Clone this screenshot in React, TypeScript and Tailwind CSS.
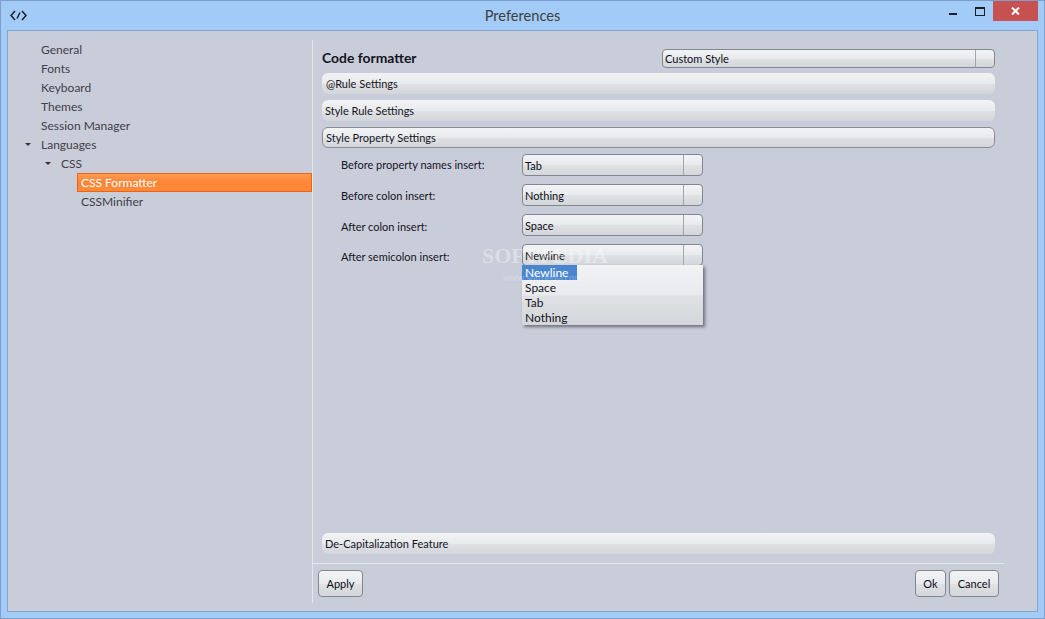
const font = "font-['Lato','Open_Sans',sans-serif]";

const grad = 'bg-[linear-gradient(to_bottom,#f2f3f5_0%,#e9eaed_50%,#dfe1e4_52%,#d3d6da_100%)]';

function TreeRow({ label, indent, arrow, selected }: { label: string; indent: string; arrow?: string; selected?: boolean }) {
  if (selected) {
    return (
      <div className={`h-[19px] ${indent} flex`}>
        <div className="flex-1 flex items-center pl-[3px] text-white border border-[#f0640f] bg-[linear-gradient(to_bottom,#ff9a52,#ff8536_50%,#ff8a3c)]">
          {label}
        </div>
      </div>
    );
  }
  return (
    <div className={`h-[19px] ${indent} flex items-center text-[#40404a] relative`}>
      {arrow && (
        <span className={`absolute ${arrow} top-[8px] w-0 h-0 border-l-[3px] border-r-[3px] border-t-[3px] border-l-transparent border-r-transparent border-t-[#3a3428]`} />
      )}
      {label}
    </div>
  );
}

function Section({ label, open, pad }: { label: string; open?: boolean; pad: string }) {
  return (
    <div
      className={`h-[21px] flex items-center ${pad} pt-[2px] text-[11px] text-[#14141e] ${grad} rounded-[6px] ${open ? 'border border-[#8a8d94]' : ''}`}
    >
      {label}
    </div>
  );
}

function Combo({ value, width, height }: { value: string; width: string; height: string }) {
  return (
    <div className={`${width} ${height} flex items-stretch border border-[#83868d] rounded-[4px] ${grad} text-[11px] text-[#0c0c16]`}>
      <div className="flex-1 flex items-center pl-[2px] pt-[3px]">{value}</div>
      <div className="w-[19px] border-l border-[#a2a5ab]" />
    </div>
  );
}

function PropRow({ label, value, labelPad }: { label: string; value: string; labelPad: string }) {
  return (
    <div className="flex items-center h-[22px]">
      <div className={`w-[200px] pl-[19px] ${labelPad} text-[11px] text-[#14141e]`}>{label}</div>
      <Combo value={value} width="w-[181px]" height="h-[22px]" />
    </div>
  );
}

function Btn({ label, width }: { label: string; width: string }) {
  return (
    <div className={`${width} h-[27px] flex items-center justify-center pt-[2px] border border-[#83868d] rounded-[4px] ${grad} text-[11px] text-[#0c0c16]`}>
      {label}
    </div>
  );
}

export default function App() {
  return (
    <div className={`${font} w-[1045px] h-[619px] flex flex-col bg-[#a3cbf8] border border-[#7f9fca] text-[12px] overflow-hidden`}>
      <div className="h-[29px] grid grid-cols-[1fr_auto_1fr] items-start shrink-0">
        <div className="pl-[9px] pt-[9px]">
          <svg width="17" height="11" viewBox="0 0 17 11" fill="none" stroke="#15181c" strokeWidth="1.4">
            <path d="M5 1 1 5.5 5 10" />
            <path d="M12 1 16 5.5 12 10" />
            <path d="M7 8.5 10 2.5" />
          </svg>
        </div>
        <div className="pt-[4px] text-[14.6px] text-[#3c3f44]">Preferences</div>
        <div className="flex justify-end items-start pr-[6px]">
          <div className="w-[8px] h-[2px] mt-[12px] mr-[18px] bg-[#1c1f24]" />
          <svg width="10" height="9" viewBox="0 0 10 9" className="mt-[6px] mr-[8px]" fill="none" stroke="#1c1f24">
            <rect x="0.5" y="0.5" width="9" height="8" />
            <path d="M0 1.5H10" />
          </svg>
          <div className="w-[45px] h-[20px] bg-[#c75050] flex items-center justify-center">
            <svg width="9" height="8" viewBox="0 0 9 8" stroke="#fff" strokeWidth="2">
              <path d="M1 0.5 8 7.5M8 0.5 1 7.5" />
            </svg>
          </div>
        </div>
      </div>

      <div className="flex-1 mx-[6px] mb-[6px] flex border border-[#84a5ce] bg-[#c9cdd9] pt-[9px] pb-[8px] relative">
        <div className="w-[304px] shrink-0">
          <TreeRow label="General" indent="pl-[33px]" />
          <TreeRow label="Fonts" indent="pl-[33px]" />
          <TreeRow label="Keyboard" indent="pl-[33px]" />
          <TreeRow label="Themes" indent="pl-[33px]" />
          <TreeRow label="Session Manager" indent="pl-[33px]" />
          <TreeRow label="Languages" indent="pl-[33px]" arrow="left-[17px]" />
          <TreeRow label="CSS" indent="pl-[53px]" arrow="left-[37px]" />
          <TreeRow label="CSS Formatter" indent="pl-[69px]" selected />
          <TreeRow label="CSSMinifier" indent="pl-[73px]" />
        </div>

        <div className="flex-1 flex flex-col border-l border-[#e4e6ea]">
          <div className="pl-[9px] pr-[42px] flex-1 flex flex-col">
            <div className="flex items-center justify-between h-[24px] mt-[6px] mb-[3px]">
              <div className="text-[13.9px] font-bold text-[#14141e]">Code formatter</div>
              <Combo value="Custom Style" width="w-[333px]" height="h-[19px]" />
            </div>
            <div className="flex flex-col gap-[6px]">
              <Section label="@Rule Settings" pad="pl-[4px]" />
              <Section label="Style Rule Settings" pad="pl-[3px]" />
              <Section label="Style Property Settings" pad="pl-[3px]" open />
            </div>
            <div className="mt-[6px] flex flex-col gap-[8px]">
              <PropRow label="Before property names insert:" value="Tab" labelPad="pt-[1px]" />
              <PropRow label="Before colon insert:" value="Nothing" labelPad="pt-[3px]" />
              <PropRow label="After colon insert:" value="Space" labelPad="pt-[5px]" />
              <PropRow label="After semicolon insert:" value="Newline" labelPad="pt-[5px]" />
            </div>
            <div className="mt-auto mb-[9px]">
              <Section label="De-Capitalization Feature" pad="pl-[3px]" />
            </div>
          </div>
          <div className="border-t border-[#e4e6ea] mr-[33px] pt-[6px] pb-[6px] pl-[5px] pr-[5px] flex justify-between">
            <Btn label="Apply" width="w-[45px]" />
            <div className="flex gap-[3px]">
              <Btn label="Ok" width="w-[31px]" />
              <Btn label="Cancel" width="w-[50px]" />
            </div>
          </div>
        </div>

        <div className={`absolute left-[514px] top-[234px] w-[181px] h-[60px] ${grad} shadow-[2px_2px_3px_rgba(60,60,70,0.65)] text-[12px] leading-[15px] text-[#14141e]`}>
          <div className="h-[15px] w-[55px] pl-[3px] bg-[#4a86cf] text-white">Newline</div>
          <div className="h-[15px] pl-[3px]">Space</div>
          <div className="h-[15px] pl-[3px]">Tab</div>
          <div className="h-[15px] pl-[3px]">Nothing</div>
        </div>

        <div className="absolute left-[474px] top-[208px] font-['Liberation_Serif',serif] text-[22px] font-bold text-white/35 pointer-events-none">
          SOFTPEDIA
        </div>
        <div className="absolute left-[495px] top-[240px] text-[9px] text-white/30 pointer-events-none">
          www.softpedia.com
        </div>
      </div>
    </div>
  );
}
